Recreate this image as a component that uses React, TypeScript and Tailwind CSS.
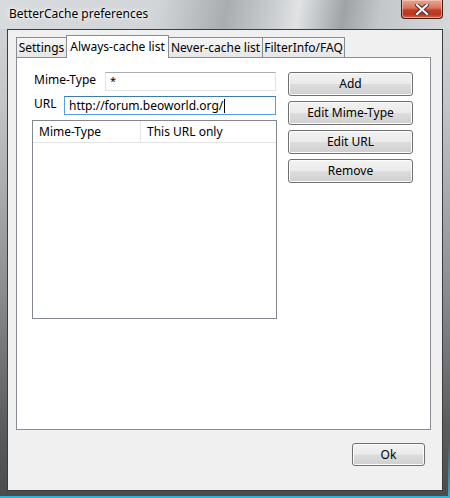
import React from "react";

const font = "font-['Noto_Sans','Liberation_Sans',sans-serif]";

function Btn({ label, w = "w-[125px]", h = "h-[24px]" }: { label: string; w?: string; h?: string }) {
  return (
    <div
      className={`${w} ${h} rounded-[3px] border border-[#707070] bg-[linear-gradient(180deg,#f2f2f2_0%,#ebebeb_48%,#dddddd_52%,#cfcfcf_100%)] shadow-[inset_0_0_0_1px_#fcfcfc] flex items-center justify-center text-[12px] text-black`}
    >
      {label}
    </div>
  );
}

export default function App() {
  return (
    <div className={`${font} w-[450px] h-[498px] relative overflow-hidden bg-[linear-gradient(180deg,#d6d9dc_0%,#c3c7ca_20%,#8f9396_55%,#5b5d5f_85%,#4a4b4c_100%)]`}>
      {/* title bar glass */}
      <div className="h-[29px] bg-[linear-gradient(100deg,#d8dbdd_0%,#d2d5d8_35%,#a9adb0_50%,#c9cccf_60%,#e0e2e4_66%,#9fa3a6_76%,#c4c7ca_84%,#d6d9db_100%)] flex items-center pl-[9px] pb-[2px]">
        <span className="text-[12px] text-black [text-shadow:0_0_6px_#ffffff,0_0_3px_#ffffff]">BetterCache preferences</span>
      </div>
      {/* close button */}
      <div className="absolute top-0 left-[401px] w-[42px] h-[19px] rounded-b-[4px] border border-t-0 border-[#4a1c14] bg-[linear-gradient(180deg,#e6a796_0%,#d8735c_45%,#c2402a_55%,#b8361f_80%,#d06a4e_100%)] shadow-[inset_0_0_0_1px_rgba(255,220,210,0.5)] flex items-center justify-center">
        <svg width="14" height="11" viewBox="0 0 14 11">
          <path d="M2 1 L12 10 M12 1 L2 10" stroke="#4a2a24" strokeWidth="4" strokeLinecap="square" />
          <path d="M2 1 L12 10 M12 1 L2 10" stroke="#f4f4f4" strokeWidth="2.2" strokeLinecap="square" />
        </svg>
      </div>
      {/* outer cyan accents */}
      <div className="absolute left-0 right-0 bottom-0 h-[2px] bg-[#2fb3d9]" />
      <div className="absolute top-[440px] right-0 bottom-0 w-[2px] bg-[linear-gradient(180deg,transparent,#2fb3d9)]" />

      {/* client area */}
      <div className="absolute left-[7px] top-[29px] w-[436px] h-[462px] border border-[#3c3c3c] bg-[#f0f0f0] flex flex-col">
        {/* tabs */}
        <div className="flex items-end h-[27px] pl-[8px] text-[12px] text-black">
          <div className="w-[51px] h-[20px] border border-b-0 border-[#898c95] bg-[linear-gradient(180deg,#f5f5f5,#e6e6e6)] flex items-center justify-center">
            Settings
          </div>
          <div className="w-[103px] h-[23px] -ml-px -mb-px border border-b-0 border-[#898c95] bg-white relative z-10 flex items-center justify-center pb-[1px]">
            Always-cache list
          </div>
          <div className="w-[95px] h-[20px] -ml-px border border-b-0 border-[#898c95] bg-[linear-gradient(180deg,#f5f5f5,#e6e6e6)] flex items-center justify-center">
            Never-cache list
          </div>
          <div className="w-[83px] h-[20px] -ml-px border border-b-0 border-[#898c95] bg-[linear-gradient(180deg,#f5f5f5,#e6e6e6)] flex items-center justify-center">
            FilterInfo/FAQ
          </div>
        </div>
        {/* panel */}
        <div className="ml-[8px] w-[415px] h-[373px] border border-[#898c95] bg-white flex pt-[14px] pl-[15px] text-[12px] text-black">
          <div className="w-[245px] flex flex-col">
            <div className="h-[19px] flex items-center">
              <span className="w-[73px] pl-[2px] -mt-[4px]">Mime-Type</span>
              <div className="w-[171px] h-[19px] border border-[#e2e3ea] border-t-[#abadb3] flex items-center pl-[4px] text-[11px]">*</div>
            </div>
            <div className="h-[19px] mt-[5px] flex items-center">
              <span className="w-[32px] pl-[2px] -mt-[4px]">URL</span>
              <div className="w-[212px] h-[19px] border border-[#569de5] border-t-[#3d7bad] flex items-center pl-[4px]">
                http://forum.beoworld.org/<span className="inline-block w-px h-[14px] bg-black ml-[1px]" />
              </div>
            </div>
            <div className="mt-[5px] w-[245px] h-[199px] border border-[#828790] bg-white flex flex-col">
              <div className="h-[22px] flex border-b border-[#e5e5e5]">
                <div className="w-[108px] border-r border-[#e5e5e5] pl-[6px] flex items-center">Mime-Type</div>
                <div className="flex-1 pl-[6px] flex items-center">This URL only</div>
              </div>
            </div>
          </div>
          <div className="ml-[11px] flex flex-col gap-[5px]">
            <Btn label="Add" />
            <Btn label="Edit Mime-Type" />
            <Btn label="Edit URL" />
            <Btn label="Remove" />
          </div>
        </div>
        {/* footer */}
        <div className="flex justify-end pr-[17px] pt-[13px]">
          <Btn label="Ok" w="w-[73px]" h="h-[23px]" />
        </div>
      </div>
    </div>
  );
}
